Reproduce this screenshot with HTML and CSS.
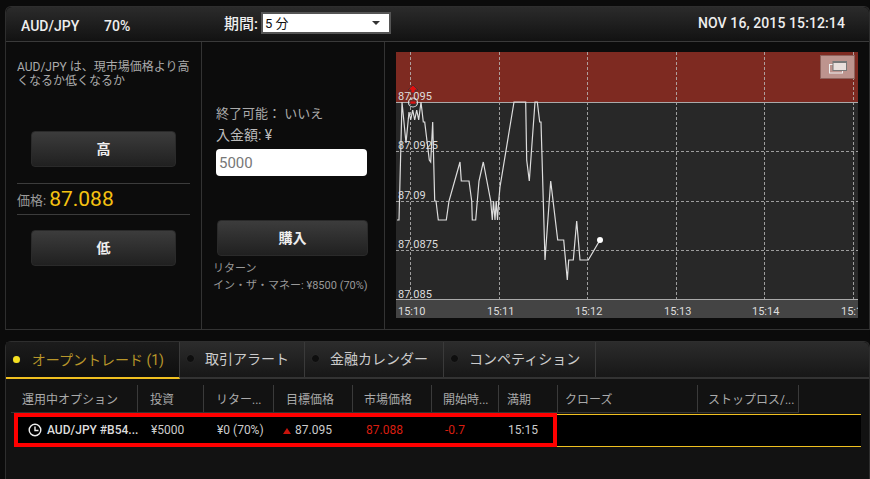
FILE: index.html
```html
<!DOCTYPE html>
<html lang="ja">
<head>
    <meta charset="UTF-8">
    <meta name="viewport" content="width=device-width, initial-scale=1.0">
    <title>AUD/JPY</title>
    <link rel="stylesheet" href="styles.css">
</head>
<body>
    <div class="panel trade-panel">
        <div class="top-bar">
            <span class="pair">AUD/JPY</span>
            <span class="payout">70%</span>
            <span class="period-label">期間:</span>
            <div class="period-select"><span>5 分</span><i class="caret"></i></div>
            <span class="clock">NOV 16, 2015 15:12:14</span>
        </div>
        <div class="trade-body">
            <div class="col-direction">
                <p class="question">AUD/JPY は、現市場価格より高くなるか低くなるか</p>
                <button class="btn btn-dir">高</button>
                <div class="price-row"><span class="price-label">価格:</span><span class="price">87.088</span></div>
                <button class="btn btn-dir">低</button>
            </div>
            <div class="col-order">
                <div class="order-line">終了可能： いいえ</div>
                <div class="amount-label">入金額: ¥</div>
                <input class="amount" type="text" placeholder="5000">
                <button class="btn btn-buy">購入</button>
                <div class="return-info">リターン<br>イン・ザ・マネー: ¥8500 (70%)</div>
            </div>
            <div class="col-chart">
                <div class="chart">
                    <svg class="chart-svg" width="462" height="266" viewBox="0 0 462 266">
                        <rect class="zone" x="0" y="0" width="462" height="50"/>
                        <rect class="axis-bg" x="0" y="247" width="462" height="19"/>
                        <g class="grid">
                            <path d="M0 99.500H462M0 149.500H462M0 198.500H462"/>
                            <path d="M14.500 0V247M103.500 0V247M191.500 0V247M280.500 0V247M368.500 0V247M457.500 0V247"/>
                        </g>
                        <path class="limit" d="M0 50.500H462M0 247.500H462"/>
                        <polyline class="line" points="1,168 3,168 6,50 10,91 13,60 14.700,68 16.700,58 18.700,68 20.700,58 22.700,68 25,50 27.300,70 28.700,70 33.300,108 34.700,110 36.700,70 38.700,149 40,149 42.300,168 50.300,168 53,149 64,110 65.300,129 73,129 75.700,149 76.300,168 79.700,168 83,129 87.300,110 94.700,149 96.300,168 97.500,149 99,168 100.200,149 101.500,168 102.700,149 104,135 118,50 129.700,50 130.700,108 133.300,129 139,50 141.300,50 143.700,70 145,70 149,208 154.700,129 161.700,188 167.700,188 171.300,228 172.700,208 177.300,208 180.700,169 184,208 192.300,208 204,188"/>
                        <circle class="dot" cx="204" cy="188" r="3"/>
                        <path class="entry-mark" d="M17 33l5 5h-3v3h-4v-3h-3zM14 49h6v3h-6z"/>
                        <g class="labels">
                            <text x="2" y="48">87.095</text>
                            <text x="2" y="97">87.0925</text>
                            <text x="2" y="147">87.09</text>
                            <text x="2" y="196">87.0875</text>
                            <text x="2" y="246">87.085</text>
                            <text x="2" y="263">15:10</text>
                            <text x="91" y="263">15:11</text>
                            <text x="179" y="263">15:12</text>
                            <text x="268" y="263">15:13</text>
                            <text x="356" y="263">15:14</text>
                            <text x="445" y="263">15:15</text>
                        </g>
                        <circle class="entry-ring" cx="17" cy="50.500" r="4.500"/>
                    </svg>
                    <div class="chart-toggle">
                        <svg width="18" height="13" viewBox="0 0 18 13">
                            <rect class="win-back" x="0.500" y="3.500" width="13" height="8.500"/>
                            <rect class="win-front" x="4" y="0.500" width="13.500" height="9"/>
                            <rect class="win-top" x="4" y="0" width="14" height="2"/>
                        </svg>
                    </div>
                </div>
            </div>
        </div>
    </div>

    <div class="panel list-panel">
        <div class="tabs">
            <div class="tab active"><i class="led"></i>オープントレード (1)</div>
            <div class="tab"><i class="led"></i>取引アラート</div>
            <div class="tab"><i class="led"></i>金融カレンダー</div>
            <div class="tab"><i class="led"></i>コンペティション</div>
        </div>
        <div class="table-head">
            <div class="th th-option">運用中オプション</div>
            <div class="th th-invest">投資</div>
            <div class="th th-return">リター...</div>
            <div class="th th-target">目標価格</div>
            <div class="th th-market">市場価格</div>
            <div class="th th-start">開始時...</div>
            <div class="th th-expiry">満期</div>
            <div class="th th-close">クローズ</div>
            <div class="th th-stop">ストップロス/...</div>
        </div>
        <div class="table-row">
            <div class="row-outline">
                <div class="td td-option">
                    <svg class="clock-icon" width="14" height="14" viewBox="0 0 14 14"><circle cx="7" cy="7" r="5.800"/><path d="M7 3.500V7.500H10.500"/></svg>
                    AUD/JPY #B54...
                </div>
                <div class="td td-invest">¥5000</div>
                <div class="td td-return">¥0 (70%)</div>
                <div class="td td-target"><i class="up-arrow"></i>87.095</div>
                <div class="td td-market red">87.088</div>
                <div class="td td-start red">-0.7</div>
                <div class="td td-expiry">15:15</div>
            </div>
        </div>
    </div>
</body>
</html>
```

FILE: styles.css
```css
* {
    box-sizing: border-box;
}

body {
    margin: 0;
    width: 870px;
    height: 479px;
    overflow: hidden;
    background-color: #0b0b0b;
    color: #ccc;
    font-family: Roboto, "Noto Sans CJK JP", sans-serif;
}

.panel {
    margin-left: 5px;
    width: 865px;
    border: 1px solid #2e2e2e;
    border-radius: 6px 6px 0 0;
}

.trade-panel {
    margin-top: 6px;
    height: 324px;
    background-color: #0c0c0c;
    border-bottom: 1px solid #333;
}

.top-bar {
    height: 35px;
    display: flex;
    align-items: center;
    background: linear-gradient(#2b2b2b, #121212);
    border-bottom: 1px solid #3a3a3a;
    border-radius: 6px 6px 0 0;
    color: #eee;
    font-size: 14px;
    font-weight: 500;
}

.pair {
    margin-left: 15px;
    width: 83px;
    padding-top: 4px;
}

.payout {
    width: 120px;
    padding-top: 4px;
}

.period-label {
    font-size: 15px;
    width: 37px;
    margin-top: -3px;
}

.period-select {
    width: 130px;
    height: 22px;
    margin-top: -3px;
    display: flex;
    align-items: center;
    justify-content: space-between;
    padding: 0 9px 0 2px;
    background-color: #fff;
    border: 2px solid #555;
    color: #111;
    font-size: 13px;
    font-weight: 400;
}

.caret {
    border-left: 4px solid transparent;
    border-right: 4px solid transparent;
    border-top: 4px solid #333;
}

.clock {
    margin-left: auto;
    margin-right: 24px;
    margin-top: -3px;
    font-size: 14px;
    letter-spacing: 0.1px;
}

.trade-body {
    display: flex;
    height: 287px;
}

.col-direction {
    width: 196px;
    padding: 0 11px;
    border-right: 1px solid #333;
}

.question {
    margin: 18px 0 0;
    height: 71px;
    font-size: 12px;
    line-height: 14px;
    color: #aaa;
}

.btn {
    display: block;
    padding: 0 0 2px;
    border: 1px solid #2a2a2a;
    border-radius: 4px;
    background: linear-gradient(#3c3c3c, #202020);
    color: #eee;
    font-family: inherit;
    font-size: 14px;
    font-weight: 700;
}

.btn-dir {
    width: 145px;
    height: 36px;
    margin-left: 14px;
}

.price-row {
    height: 32px;
    margin: 16px 0 15px;
    display: flex;
    align-items: center;
    border-top: 1px solid #3c3c3c;
    border-bottom: 1px solid #3c3c3c;
}

.price-label {
    font-size: 13px;
    color: #999;
    margin-right: 3px;
}

.price {
    font-size: 21px;
    color: #f5c211;
}

.col-order {
    width: 183px;
    padding: 64px 0 0 14px;
    border-right: 1px solid #333;
}

.order-line {
    font-size: 13px;
    line-height: 16px;
    color: #aaa;
}

.amount-label {
    margin-top: 5px;
    font-size: 14px;
    line-height: 16px;
    color: #bbb;
}

.amount {
    display: block;
    width: 151px;
    height: 27px;
    margin-top: 6px;
    padding: 0 3px;
    border: none;
    border-radius: 4px;
    background-color: #fff;
    font-family: inherit;
    font-size: 15px;
}

.amount::placeholder {
    color: #777;
    opacity: 1;
}

.btn-buy {
    width: 151px;
    height: 36px;
    margin-top: 44px;
    margin-left: 1px;
}

.return-info {
    margin: 4px 0 0 -3px;
    font-size: 11px;
    line-height: 17px;
    color: #999;
    white-space: nowrap;
}

.col-chart {
    flex: 1;
    padding: 10px 0 0 11px;
}

.chart {
    position: relative;
    width: 462px;
    height: 266px;
    background-color: #282828;
}

.chart-svg {
    display: block;
}

.zone {
    fill: #7e2a21;
}

.axis-bg {
    fill: #444;
}

.grid path {
    fill: none;
    stroke: #bbb;
    stroke-opacity: 0.8;
    stroke-dasharray: 3 2;
}

.limit {
    fill: none;
    stroke: #aaa;
    stroke-width: 1;
}

.line {
    fill: none;
    stroke: #ddd;
    stroke-width: 1.200;
}

.dot {
    fill: #fff;
}

.entry-ring {
    fill: none;
    stroke: #ddd;
    stroke-width: 1.200;
}

.entry-mark {
    fill: #e01010;
    stroke: #333;
    stroke-width: 0.700;
}

.labels text {
    fill: #ddd;
    font-family: Roboto, sans-serif;
    font-size: 11px;
}

.chart-toggle {
    position: absolute;
    top: 3px;
    right: 3px;
    width: 35px;
    height: 24px;
    display: flex;
    align-items: center;
    justify-content: center;
    background-color: #bd948e;
    border: 1px solid #8d625c;
}

.win-back {
    fill: #bd948e;
    stroke: #eee;
}

.win-front {
    fill: #e9dfdc;
    stroke: #777;
}

.win-top {
    fill: #777;
}

.list-panel {
    margin-top: 11px;
    height: 143px;
    background-color: #121212;
    border-bottom: none;
}

.tabs {
    display: flex;
    height: 37px;
    background: linear-gradient(#2c2c2c, #171717);
    border-bottom: 2px solid #333;
    border-radius: 6px 6px 0 0;
}

.tab {
    display: flex;
    align-items: center;
    padding: 0 15px 3px 7px;
    border-right: 1px solid #3a3a3a;
    font-size: 14px;
    color: #ccc;
    white-space: nowrap;
}

.tab.active {
    width: 174px;
    margin-bottom: -2px;
    border-bottom: 2px solid #f0c020;
    padding-bottom: 1px;
    background: linear-gradient(#1c1c1c, #0e0e0e);
    color: #b8962a;
}

.led {
    width: 7px;
    height: 7px;
    margin-right: 11px;
    border-radius: 50%;
    background-color: #0e0e0e;
    box-shadow: 0 0 1px #444;
}

.tab.active .led {
    margin-right: 12px;
    background-color: #f5e020;
}

.table-head {
    display: flex;
    height: 28px;
    margin-top: 6px;
    margin-left: 5px;
    width: 788px;
    border-bottom: 1px solid #333;
}

.th {
    flex: none;
    display: flex;
    align-items: center;
    padding-left: 12px;
    border-right: 1px solid #3a3a3a;
    font-size: 12px;
    color: #aaa;
    white-space: nowrap;
}

.th-option { width: 127px; padding-left: 11px; }
.th-invest { width: 66px; }
.th-return { width: 70px; }
.th-target { width: 79px; }
.th-market { width: 79px; padding-left: 11px; }
.th-start { width: 67px; padding-left: 11px; }
.th-expiry { width: 59px; padding-left: 8px; }
.th-close { width: 140px; padding-left: 7px; }
.th-stop { width: 101px; padding-left: 10px; }

.table-row {
    height: 33px;
    width: 847px;
    margin-top: 1px;
    margin-left: 8px;
    background-color: #000;
    border-top: 1px solid #f0c020;
    border-bottom: 1px solid #f0c020;
}

.row-outline {
    display: flex;
    align-items: center;
    width: 543px;
    height: 34px;
    margin-top: -2px;
    border: 4px solid #f00;
    background-color: #000;
}

.td {
    flex: none;
    font-size: 12px;
    color: #ccc;
    white-space: nowrap;
}

.td-option {
    width: 133px;
    padding-left: 10px;
    display: flex;
    align-items: center;
    font-weight: 500;
    color: #ddd;
}

.td-invest { width: 66px; }
.td-return { width: 66px; }
.td-target { width: 83px; }
.td-market { width: 79px; }
.td-start { width: 63px; }
.td-expiry { width: 40px; }

.clock-icon {
    margin-right: 5px;
    fill: none;
    stroke: #eee;
    stroke-width: 1.400;
}

.up-arrow {
    display: inline-block;
    margin-right: 4px;
    border-left: 4.500px solid transparent;
    border-right: 4.500px solid transparent;
    border-bottom: 6px solid #c8140c;
}

.td.red {
    color: #d81e10;
}
```
